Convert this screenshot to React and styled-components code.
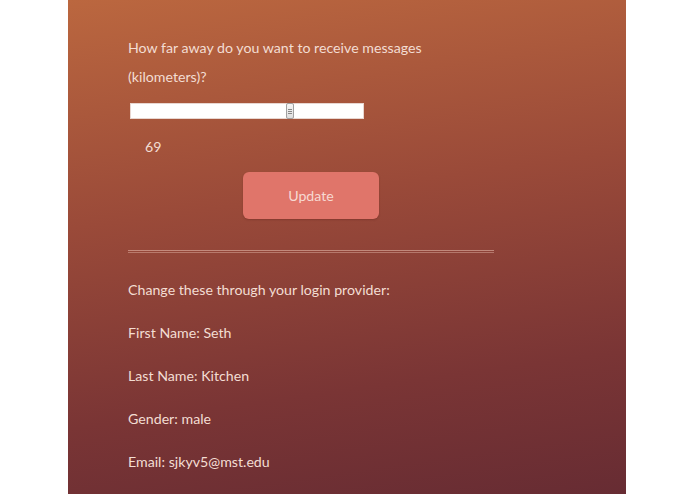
import React, { useState } from "react";
import styled, { createGlobalStyle } from "styled-components";

const Global = createGlobalStyle`
  html, body {
    margin: 0;
    padding: 0;
    background: #fff;
  }
  body {
    font-family: "Lato", "Open Sans", sans-serif;
  }
`;

const App = () => {
  const [range, setRange] = useState(69);
  return (
    <>
      <Global />
      <Page>
        <Panel>
          <Question>
            How far away do you want to receive messages (kilometers)?
          </Question>
          <Slider
            type="range"
            min="0"
            max="100"
            value={range}
            onChange={(e) => setRange(e.target.value)}
          />
          <Value>{range}</Value>
          <ButtonRow>
            <Button>Update</Button>
          </ButtonRow>
          <Rule />
          <InfoList>
            <Info>Change these through your login provider:</Info>
            <Info>First Name: Seth</Info>
            <Info>Last Name: Kitchen</Info>
            <Info>Gender: male</Info>
            <Info>Email: sjkyv5@mst.edu</Info>
          </InfoList>
        </Panel>
      </Page>
    </>
  );
};

export default App;

const Page = styled.div`
  display: flex;
  width: 695px;
  height: 494px;
  overflow: hidden;
`;

const Panel = styled.div`
  margin-left: 68px;
  width: 558px;
  height: 494px;
  box-sizing: border-box;
  padding: 33px 0 0 60px;
  background: linear-gradient(172deg, #bb673f 0%, #9a4a39 40%, #7a3535 75%, #672c33 100%);
  color: #f3ddd3;
  font-size: 14.2px;
  font-weight: 400;
`;

const Question = styled.p`
  margin: 0;
  width: 310px;
  line-height: 29px;
`;

const Slider = styled.input`
  -webkit-appearance: none;
  appearance: none;
  display: block;
  margin: 12px 0 0 2px;
  width: 234px;
  height: 16px;
  background: #fff;
  border: 1px solid #e8d6d0;
  box-sizing: border-box;
  outline: none;
  &::-webkit-slider-thumb {
    -webkit-appearance: none;
    width: 8px;
    height: 16px;
    background:
      linear-gradient(#888, #888) center 5px / 4px 1px no-repeat,
      linear-gradient(#888, #888) center 7px / 4px 1px no-repeat,
      linear-gradient(#888, #888) center 9px / 4px 1px no-repeat,
      linear-gradient(#f6f6f6, #dedede);
    border: 1px solid #a0a0a0;
    border-radius: 2px;
    box-sizing: border-box;
  }
`;

const Value = styled.div`
  margin: 19px 0 0 17px;
  line-height: 18px;
`;

const ButtonRow = styled.div`
  display: flex;
  padding-left: 115px;
  margin-top: 16px;
`;

const Button = styled.button`
  width: 136px;
  height: 47px;
  border: none;
  border-radius: 6px;
  background: #e0756a;
  color: #f7d9d2;
  font-family: "Lato", sans-serif;
  font-size: 14.2px;
  font-weight: 400;
  box-shadow: 0 1px 2px rgba(80, 20, 20, 0.25);
`;

const Rule = styled.hr`
  width: 366px;
  margin: 31px 0 0 0;
  height: 0;
  border: none;
  border-top: 1px solid rgba(255, 220, 205, 0.45);
  border-bottom: 1px solid rgba(255, 220, 205, 0.35);
  padding-top: 1px;
`;

const InfoList = styled.div`
  display: flex;
  flex-direction: column;
  margin-top: 15px;
`;

const Info = styled.p`
  margin: 0;
  height: 43px;
  line-height: 43px;
`;
